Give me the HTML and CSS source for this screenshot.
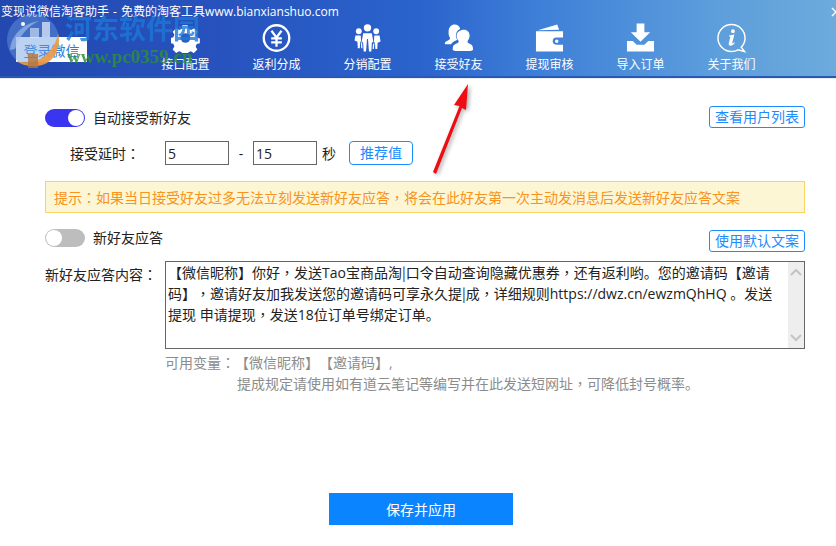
FILE: index.html
```html
<!DOCTYPE html>
<html lang="en">
<head>
  <meta charset="UTF-8">
  <meta name="viewport" content="width=device-width, initial-scale=1.0">
  <title>变现说微信淘客助手</title>
  <link rel="stylesheet" href="styles.css">
</head>
<body>
  <div class="header">
    <div class="title">变现说微信淘客助手 - 免费的淘客工具www.bianxianshuo.com</div>
    <svg class="close" viewBox="0 0 10 10"><path d="M1 1l8 8M1 9l8-8" stroke="#fff" stroke-width="1.400"/></svg>
    <div class="header-row">
      <div class="login-wrap"><button class="login">登录微信</button></div>
      <div class="nav">
        <div class="nav-item">
          <svg viewBox="0 0 30 30" class="icon">
            <path fill="#fff" fill-rule="evenodd" d="M12 1h6l1 4 3 1.300 3.500-2 4 4.200-2 3.500 1.200 3 3.300 1v5.500l-3.600 1-1.200 3 2 3.400-4.100 4-3.400-2-3 1.200-1 3.400h-5.500l-1-3.500-3-1.200-3.400 2-4-4 2-3.500-1.200-3-3.600-1v-5.500l3.500-1 1.300-3-2-3.400 4-4.100 3.500 2 3-1.300z" transform="translate(1 1) scale(.9)"/>
            <circle cx="15" cy="15" r="5" fill="#2a5fc6"/>
          </svg>
          <span>接口配置</span>
        </div>
        <div class="nav-item">
          <svg viewBox="0 0 30 30" class="icon">
            <circle cx="15" cy="15" r="13.200" fill="none" stroke="#fff" stroke-width="2.400"/>
            <path fill="none" stroke="#fff" stroke-width="2.300" d="M9.800 7.500 15 14.500l5.200-7M15 14.500v9.500M9.500 15.500h11M9.500 19.500h11"/>
          </svg>
          <span>返利分成</span>
        </div>
        <div class="nav-item">
          <svg viewBox="0 0 30 30" class="icon">
            <g fill="#fff">
              <circle cx="15" cy="4.500" r="3.800"/>
              <circle cx="6" cy="8" r="3"/>
              <circle cx="24" cy="8" r="3"/>
              <path d="M10.500 10h9l1.500 9-1.500 1-.5 9h-2.500l-1-13h-1l-1 13H11l-.5-9-1.500-1z"/>
              <path d="M2.500 12.500h5.500l.5 7 1 1 .3 5H8.500l-.5-7h-.6l-.4 7H5l-.4-6.500-3-1.500z"/>
              <path d="M22 12.500h5.500l1 6-3 1.500-.4 6.500h-2l-.4-7h-.6l-.5 7h-1.300l.3-5 1-1z"/>
            </g>
          </svg>
          <span>分销配置</span>
        </div>
        <div class="nav-item">
          <svg viewBox="0 0 30 30" class="icon">
            <g fill="#fff">
              <path d="M11 1c3 0 5.200 1.800 5.700 4.600-2.700 1-4.400 3.600-4.400 6.900 0 1.700.6 3.300 1.400 4.400-1 .6-2.700 1.400-4.200 2.300-.9.500-1.700 1.300-2.200 2.300H1.500C.5 21.500.6 19.400 1.700 18.800l4-2.200c.7-.4.800-1.600.2-2.300C4.900 13 4.600 11 4.800 7.600 5 3.600 7.700 1 11 1z"/>
              <path d="M20.500 6.500c3.800 0 6 2.700 6 6 0 2-.7 4-1.800 5.200-.6.800-.4 2 .4 2.400l3.300 1.900c1.200.7 1.600 2.200 1.600 5.500-.6.500-1.500.9-2.500.9H11.500c-1 0-1.800-.4-2.500-.9 0-3 .4-4.800 1.600-5.500l3.900-2.100c.9-.4.900-1.500.3-2.200-1.100-1.200-1.800-3.200-1.800-5.200 0-3.300 3.500-6 7.500-6z"/>
            </g>
          </svg>
          <span>接受好友</span>
        </div>
        <div class="nav-item">
          <svg viewBox="0 0 30 30" class="icon">
            <path fill="#fff" d="M3 7 23 1l2 5.500z"/>
            <path fill="#fff" fill-rule="evenodd" d="M1 8h28v6.500h-7a3.700 3.700 0 0 0 0 7.400h7V29H1zM22.500 16.500a1.800 1.800 0 1 1 0 3.600 1.800 1.800 0 0 1 0-3.600z"/>
          </svg>
          <span>提现审核</span>
        </div>
        <div class="nav-item">
          <svg viewBox="0 0 30 30" class="icon">
            <path fill="#fff" d="M11 0h8v9h6l-10 10L5 9h6z"/>
            <path fill="#fff" d="M1 18h6l4 4h8l4-4h6v11H1z"/>
          </svg>
          <span>导入订单</span>
        </div>
        <div class="nav-item">
          <svg viewBox="0 0 30 30" class="icon">
            <path fill="none" stroke="#fff" stroke-width="1.500" d="M25 24.500c2.600-2.500 4-5.800 4-9.500C29 7.300 22.700 1 15 1S1 7.300 1 15s6.300 14 14 14c2.500 0 4.800-.6 6.800-1.700l6.700 1.700z"/>
            <path fill="#fff" d="M16.500 6a2 2 0 1 1 0 4 2 2 0 0 1 0-4zM12.500 12.500l5.500-1-2.200 8.500c-.2.800.3 1 .9.500l1.200-1 .5.700c-1.500 1.900-3 2.800-4.400 2.800-1.600 0-2.200-1-1.800-2.500l1.500-6c.2-.8-.2-1.100-1.200-1z"/>
          </svg>
          <span>关于我们</span>
        </div>
      </div>
    </div>
  </div>

  <div class="content">
    <div class="row row-top">
      <div class="switch-wrap">
        <span class="switch on"><i></i></span>
        <span>自动接受新好友</span>
      </div>
      <button class="btn-line wide">查看用户列表</button>
    </div>

    <div class="delay-row">
      <span class="delay-label">接受延时<span class="punc">：</span></span>
      <input class="num" type="text" value="5">
      <span class="dash">-</span>
      <input class="num" type="text" value="15">
      <span class="unit">秒</span>
      <button class="btn-line small">推荐值</button>
    </div>

    <div class="tip">提示<span class="punc">：</span>如果当日接受好友过多无法立刻发送新好友应答<span class="punc">，</span>将会在此好友第一次主动发消息后发送新好友应答文案</div>

    <div class="row row-second">
      <div class="switch-wrap">
        <span class="switch"><i></i></span>
        <span>新好友应答</span>
      </div>
      <button class="btn-line wide">使用默认文案</button>
    </div>

    <div class="reply-row">
      <span class="reply-label">新好友应答内容<span class="punc">：</span></span>
      <div class="reply-box">
        <div class="reply-text">【微信昵称】你好<span class="punc">，</span>发送Tao宝商品淘<span class="punc">|</span>口令自动查询隐藏优惠券<span class="punc">，</span>还有返利哟。您的邀请码【邀请<br>码】<span class="punc">，</span>邀请好友加我发送您的邀请码可享永久提<span class="punc">|</span>成<span class="punc">，</span>详细规则https://dwz.cn/ewzmQhHQ 。发送<br>提现 申请提现<span class="punc">，</span>发送18位订单号绑定订单。</div>
        <div class="scrollbar">
          <svg viewBox="0 0 16 10" class="arrow-btn"><path d="M3 8l5-5 5 5" fill="none" stroke="#c4c4c4" stroke-width="2"/></svg>
          <svg viewBox="0 0 16 10" class="arrow-btn"><path d="M3 2l5 5 5-5" fill="none" stroke="#c4c4c4" stroke-width="2"/></svg>
        </div>
      </div>
    </div>

    <div class="hint">
      <div>可用变量<span class="punc">：</span>【微信昵称】【邀请码】,</div>
      <div class="hint-second">提成规定请使用如有道云笔记等编写并在此发送短网址<span class="punc">，</span>可降低封号概率。</div>
    </div>

    <div class="save-row">
      <button class="save">保存并应用</button>
    </div>
  </div>

  <!-- watermark stamped over the screenshot -->
  <div class="watermark">
    <svg class="wm-logo" viewBox="0 0 60 54">
      <circle cx="28" cy="26" r="26" fill="#6a9be0" opacity=".45"/>
      <path d="M5 36C6 22 18 9 34 7c-11 5-19 14-24 28z" fill="#a9c6ee" opacity=".6"/>
      <path d="M53 19c3 12-1 24-11 30-10 5-22 4-31-2 12 3 23 1 31-7 6-6 10-13 11-21z" fill="#ee9a40" opacity=".9"/>
      <path d="M23 40h10v14H23z" fill="#b4763c" opacity=".8"/>
      <path d="M25 14h9v10h-9z" fill="#dfe9f7" opacity=".6"/>
      <path d="M37 8h8v15h-8z" fill="#e8effa" opacity=".7"/>
      <circle cx="18" cy="10" r="2" fill="#fff"/>
    </svg>
    <div class="wm-cn">河东软件园</div>
    <div class="wm-url">www.pc0359.cn</div>
  </div>

  <svg class="red-arrow" viewBox="0 0 60 110">
    <path d="M38 4 24 25 29.500 26 3 92 6 94 32 28 36 30z" fill="#ee0d12"/>
  </svg>
</body>
</html>
```

FILE: styles.css
```css
* {
  box-sizing: border-box;
}

body {
  margin: 0;
  width: 836px;
  height: 546px;
  overflow: hidden;
  background-color: #fff;
  color: #222;
  font-family: "Open Sans", "Noto Sans CJK SC", sans-serif;
  font-size: 14px;
  text-spacing-trim: space-all;
  position: relative;
}

button {
  font-family: inherit;
  cursor: pointer;
}

/* full-width punctuation sits centred in the reference */
.punc {
  font-family: "Noto Sans CJK TC", sans-serif;
}

/* header */
.header {
  height: 79px;
  padding-top: 3px;
  color: #fff;
  position: relative;
  background: linear-gradient(90deg, #2348b0 0%, #2752bd 25%, #2a63cc 50%, #3f80d8 65%, #5c9ddc 85%, #6cabdb 100%);
  border-bottom: 1px solid #e8edf5;
  box-shadow: inset 0 -2px 0 #2a58b8;
}

.title {
  height: 17px;
  padding-left: 1px;
  font-size: 12px;
  line-height: 17px;
  word-spacing: 1px;
  white-space: nowrap;
}

.close {
  position: absolute;
  right: -5px;
  top: 7px;
  width: 10px;
  height: 10px;
}

.header-row {
  display: flex;
  padding-top: 3px;
}

.login-wrap {
  width: 140px;
  padding: 14px 0 0 16px;
}

.login {
  width: 71px;
  height: 25px;
  padding: 0;
  border: none;
  background-color: #fff;
  color: #2a7de0;
  font-size: 14px;
}

.nav {
  display: flex;
}

.nav-item {
  width: 91px;
  display: flex;
  flex-direction: column;
  align-items: center;
  font-size: 12px;
  line-height: 16px;
}

.nav-item span {
  margin-top: 4px;
}

.icon {
  width: 29px;
  height: 30px;
}

/* main form */
.content {
  padding: 0 31px 0 45px;
}

.row {
  display: flex;
  justify-content: space-between;
  align-items: center;
}

.row-top {
  margin-top: 27px;
}

.row-top .switch-wrap {
  margin-top: 2px;
}

.row-second {
  margin-top: 16px;
  align-items: flex-start;
}

.row-second .btn-line {
  margin-top: 1px;
}

.switch-wrap {
  display: flex;
  align-items: center;
  gap: 8px;
  height: 18px;
  line-height: 18px;
}

.switch {
  width: 40px;
  height: 18px;
  border-radius: 9px;
  background-color: #bdbdbd;
  display: flex;
  padding: 1px;
}

.switch i {
  width: 16px;
  height: 16px;
  border-radius: 50%;
  background-color: #fff;
}

.switch.on {
  background-color: #3a35ee;
  justify-content: flex-end;
}

.btn-line {
  height: 22px;
  padding: 0;
  border: 1px solid #1b8cff;
  border-radius: 3px;
  background-color: #fff;
  color: #1b8cff;
  font-size: 14px;
  line-height: 18px;
}

.wide {
  width: 96px;
}

.small {
  width: 64px;
  height: 24px;
  border-radius: 4px;
}

.delay-row {
  display: flex;
  align-items: center;
  margin-top: 13px;
  height: 24px;
}

.delay-label {
  width: 120px;
  padding-left: 25px;
}

.num {
  width: 64px;
  height: 24px;
  padding: 0 2px;
  border: 1px solid #666;
  font-family: inherit;
  font-size: 14px;
  color: #222;
  outline: none;
}

.dash {
  width: 24px;
  text-align: center;
}

.unit {
  width: 32px;
  padding-left: 5px;
}

.tip {
  margin-top: 16px;
  height: 32px;
  padding-left: 8px;
  border: 1px solid #f8d36c;
  background-color: #fcf6d4;
  color: #f7931e;
  line-height: 30px;
  white-space: nowrap;
}

.reply-row {
  display: flex;
  margin-top: 9px;
}

.reply-label {
  width: 120px;
  padding-top: 3px;
  line-height: 20px;
}

.reply-box {
  width: 640px;
  height: 88px;
  display: flex;
  border: 1px solid #666;
}

.reply-text {
  flex: 1;
  padding: 0 2px;
  line-height: 20px;
  white-space: nowrap;
}

.scrollbar {
  width: 16px;
  background-color: #eee;
  display: flex;
  flex-direction: column;
  justify-content: space-between;
  padding: 5px 0;
}

.arrow-btn {
  width: 16px;
  height: 10px;
}

.hint {
  margin-top: 3px;
  padding-left: 120px;
  color: #8c8c8c;
  line-height: 20px;
}

.hint-second {
  padding-left: 72px;
}

.save-row {
  display: flex;
  margin-top: 99px;
  padding-left: 284px;
}

.save {
  width: 184px;
  height: 32px;
  border: none;
  background-color: #0a84ff;
  color: #fff;
  font-size: 14px;
}

/* overlays */
.watermark {
  position: absolute;
  left: 5px;
  top: 14px;
  width: 200px;
  height: 54px;
}

.wm-logo {
  position: absolute;
  left: 0;
  top: 0;
  width: 60px;
  height: 54px;
}

.wm-cn {
  position: absolute;
  left: 60px;
  top: -4px;
  font-family: "Noto Sans CJK SC", sans-serif;
  font-size: 27px;
  line-height: 36px;
  font-weight: 700;
  color: #1c78d8;
  opacity: .8;
  white-space: nowrap;
}

.wm-url {
  position: absolute;
  left: 62px;
  top: 33px;
  font-family: "Liberation Serif", serif;
  font-size: 19px;
  line-height: 20px;
  font-weight: 700;
  color: #2f8f3a;
  opacity: .85;
  white-space: nowrap;
}

.red-arrow {
  position: absolute;
  left: 430px;
  top: 80px;
  width: 60px;
  height: 110px;
  filter: drop-shadow(2px 1px 2px rgba(0, 0, 0, .35));
}
```
